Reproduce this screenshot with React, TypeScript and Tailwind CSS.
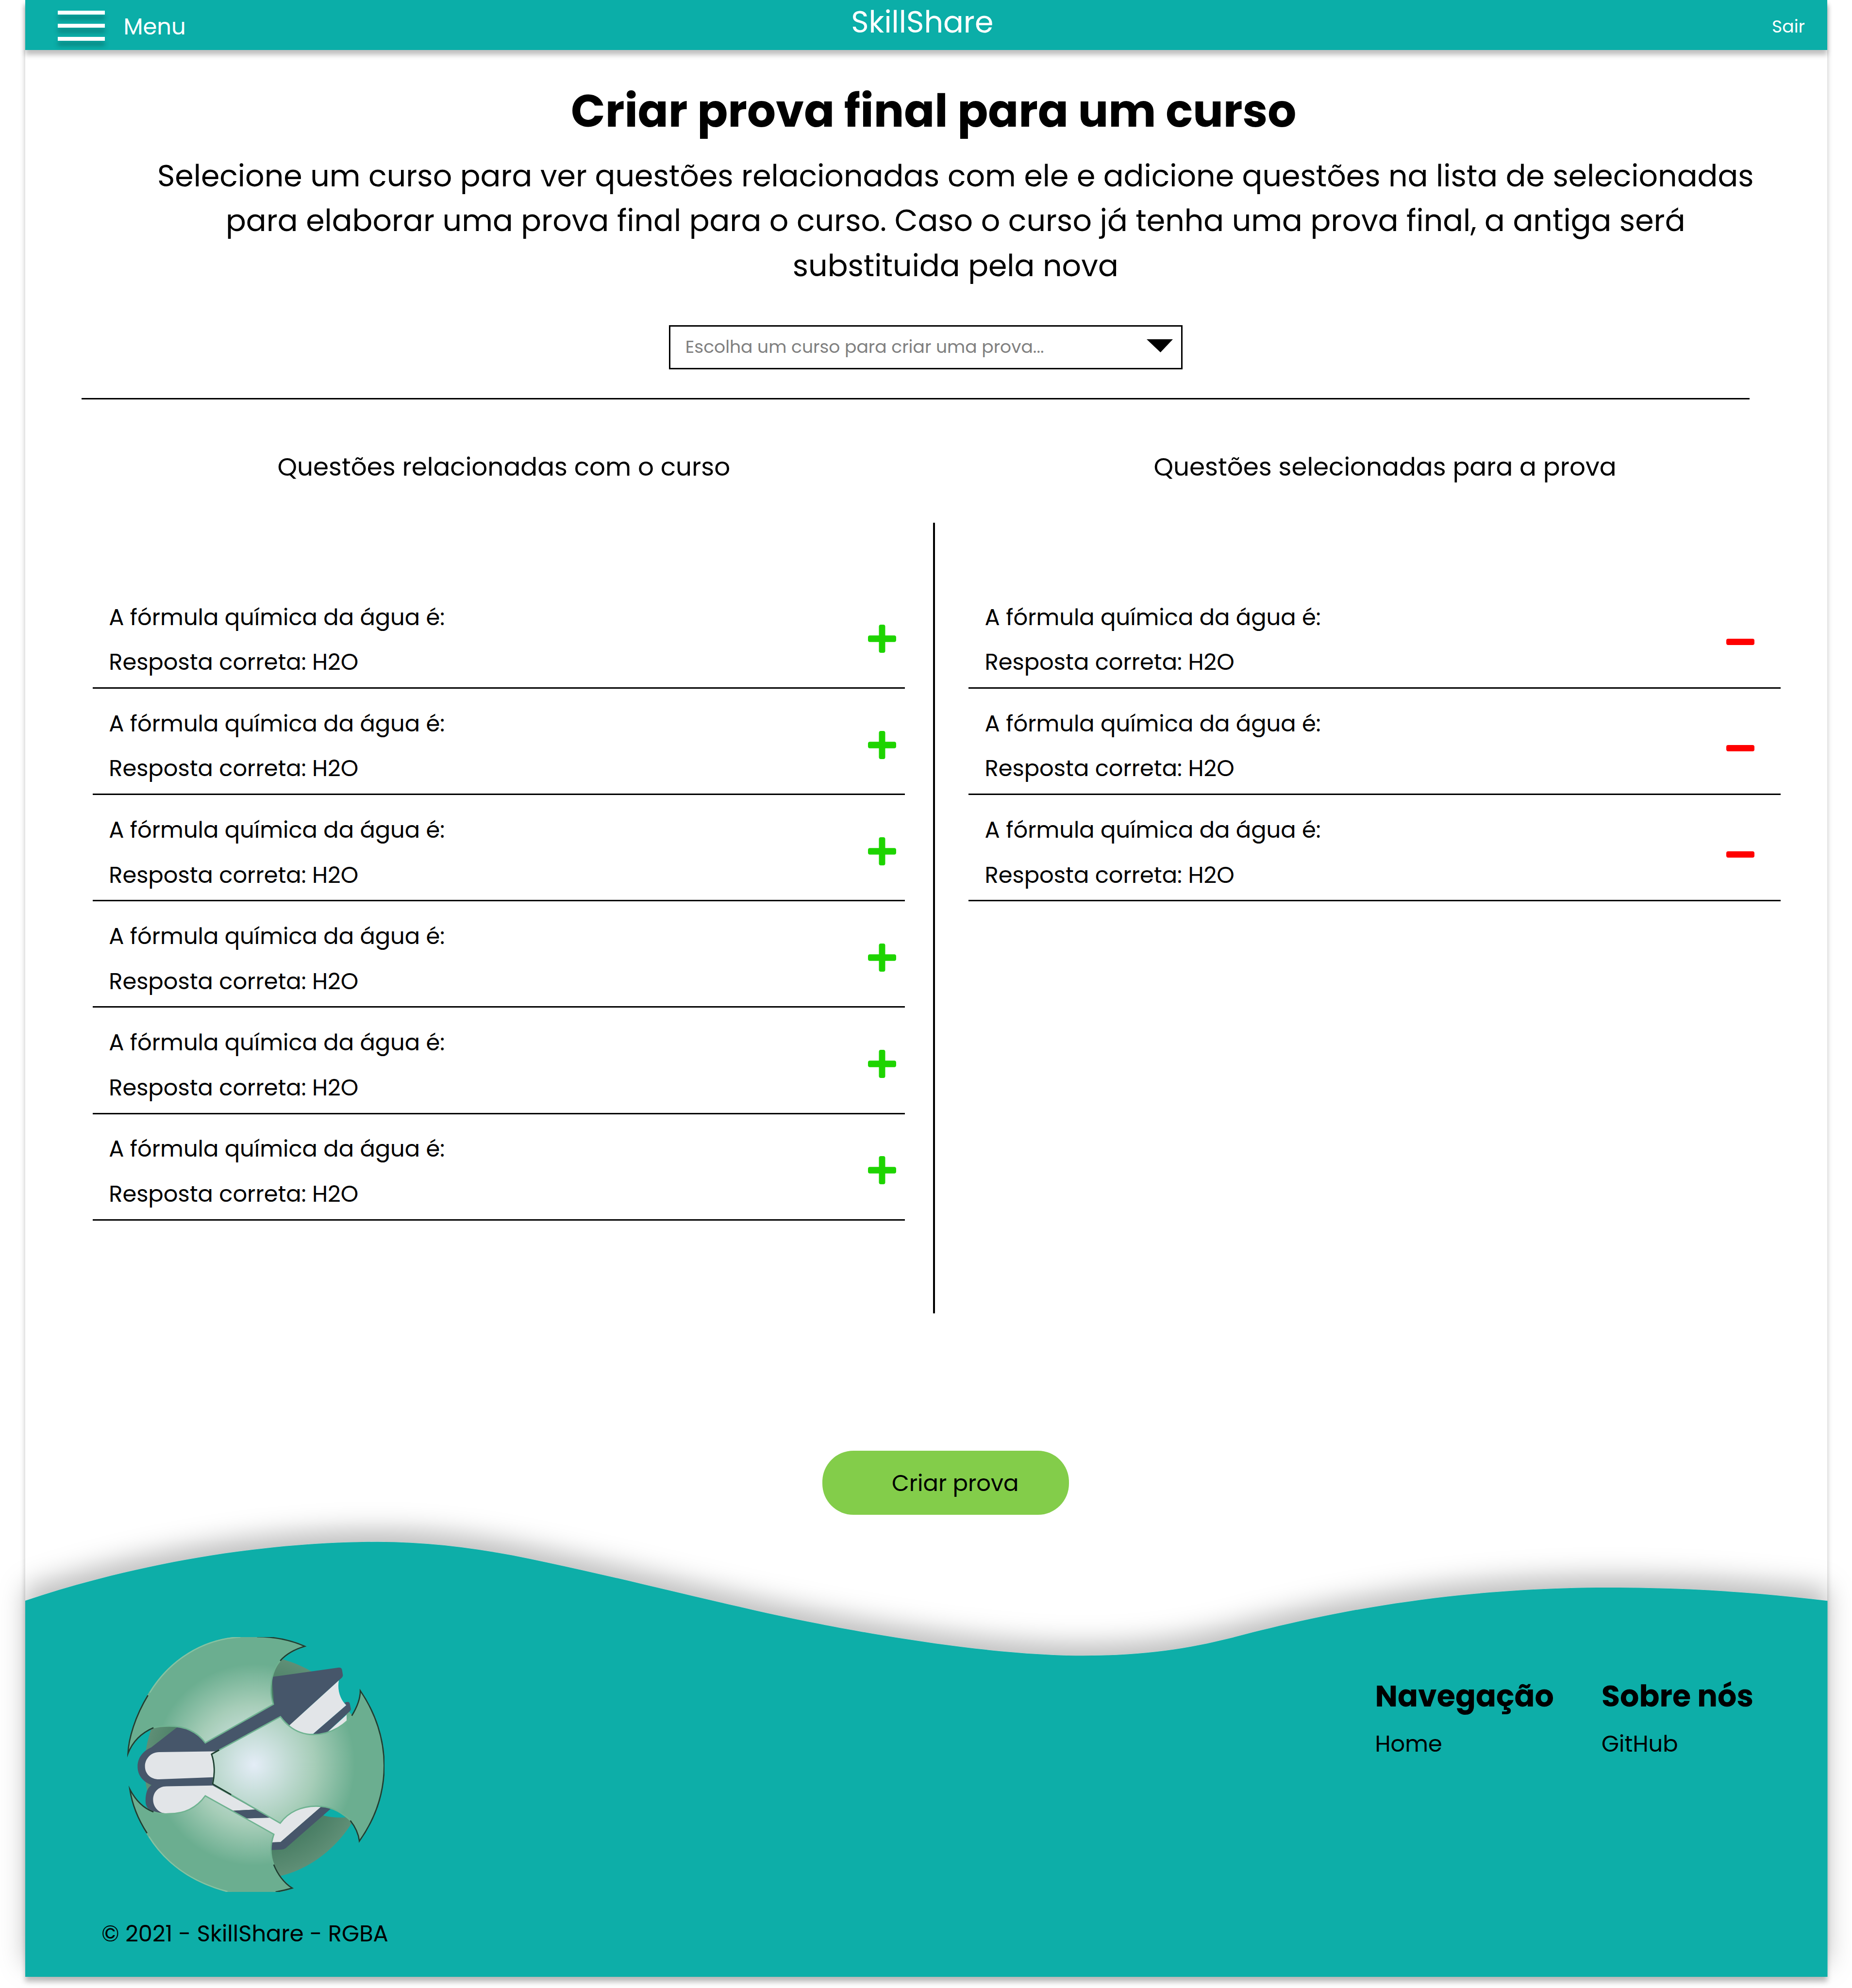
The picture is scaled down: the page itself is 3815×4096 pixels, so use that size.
import type { ReactNode } from "react";

const QUESTION = {
  title: "A fórmula química da água é:",
  answer: "Resposta correta: H2O",
};

const related = Array.from({ length: 6 }, () => QUESTION);
const selected = Array.from({ length: 3 }, () => QUESTION);

function PlusIcon() {
  return (
    <svg viewBox="0 0 58 58" className="mt-[86.5px] h-[58px] w-[58px]" fill="#1ed400">
      <rect x="0" y="22.3" width="58" height="13.4" rx="4" />
      <rect x="22.5" y="0" width="13" height="58" rx="4" />
    </svg>
  );
}

function MinusIcon() {
  return (
    <svg viewBox="0 0 58 13" className="mt-[115.5px] h-[13px] w-[58px]" fill="#ff0000">
      <rect x="0" y="0" width="58" height="13" rx="4" />
    </svg>
  );
}

function QuestionRow({ title, answer, icon }: { title: string; answer: string; icon: ReactNode }) {
  return (
    <li className="flex h-[219.1px] flex-col">
      <div className="flex h-[216.3px] justify-between pl-[33.5px]">
        <div className="pt-[25.5px] text-[46.4px] leading-[92.8px]">
          <p>{title}</p>
          <p>{answer}</p>
        </div>
        {icon}
      </div>
      <div className="h-[3px] bg-black" />
    </li>
  );
}

function Header() {
  return (
    <header className="relative grid h-[103px] shrink-0 grid-cols-3 bg-[#0baea8] text-white shadow-[0_10px_10px_rgba(0,0,0,0.25)]">
      <div className="flex pl-[67px]">
        <div className="flex w-[97px] flex-col gap-[18.7px] pt-[21.8px]">
          <span className="h-[8.3px] bg-white shadow-[0_10px_10px_rgba(0,0,0,0.25)]" />
          <span className="h-[8.3px] bg-white shadow-[0_10px_10px_rgba(0,0,0,0.25)]" />
          <span className="h-[8.3px] bg-white shadow-[0_10px_10px_rgba(0,0,0,0.25)]" />
        </div>
        <span className="pt-[3px] pl-[39px] text-[46.4px] leading-[103px]">Menu</span>
      </div>
      <div className="pr-[16px] text-center text-[61.9px] leading-[91px]">SkillShare</div>
      <div className="pr-[46px] text-right text-[36.1px] leading-[109px]">Sair</div>
    </header>
  );
}

function Wave() {
  return (
    <svg
      viewBox="51.5 3176 3712.5 897"
      className="absolute inset-0 h-full w-full overflow-visible"
      preserveAspectRatio="none"
    >
      <defs>
        <filter id="waveShadow" filterUnits="userSpaceOnUse" x="-100" y="3000" width="4000" height="1200">
          <feDropShadow dx="0" dy="-25.8" stdDeviation="25.8" floodColor="#000" floodOpacity="0.25" />
        </filter>
      </defs>
      <path
        filter="url(#waveShadow)"
        fill="#0baea8"
        d="M51.5 3298 C300 3215 560 3176.7 776.8 3176.7 C870 3176.7 960 3187 1054.5 3204.4 C1240 3241 1450 3296 1616.8 3331.5 C1780 3366 2040 3411.2 2231 3411.2 C2360 3411.2 2450 3396 2534.6 3375 C2670 3340 2940 3271 3313 3271 C3480 3271 3620 3281 3764 3298.3 V4073 H51.5 Z"
      />
    </svg>
  );
}

function Logo() {
  return (
    <svg viewBox="70 90 1400 1376" className="ml-[207.2px] h-[524.4px] w-[533.5px]">
      <defs>
        <radialGradient id="blade" gradientUnits="userSpaceOnUse" cx="765" cy="780" r="545">
          <stop offset="0" stopColor="#e4edf7" />
          <stop offset="0.6" stopColor="#a6cdb8" />
          <stop offset="1" stopColor="#6bae90" />
        </radialGradient>
        <radialGradient id="disc" gradientUnits="userSpaceOnUse" cx="770" cy="795" r="600">
          <stop offset="0.75" stopColor="#4b7f66" />
          <stop offset="1" stopColor="#5f8f76" />
        </radialGradient>
      </defs>

      {/* shaded disc behind the figure, open on the upper right */}
      <path
        fill="url(#disc)"
        d="M172 795 A600 600 0 0 1 925 212 C980 228 1030 250 1075 276 L1000 600 L1140 1055 C1185 1067 1230 1068 1282 1062 L1290 1098 C1200 1240 1060 1345 905 1382 L500 1330 A600 600 0 0 1 172 795 Z"
      />
      <path fill="#6bae90" d="M1262 510 L1275 490 L1300 520 L1262 550 Z" />

      {/* upper arm and hands */}
      <g fill="#46566a">
        <path d="M860 305 Q880 303 900 300 L1218 255 Q1236 253 1239 266 L1244 296 Q1244 304 1238 310 L1222 324 L955 567 L905 520 L560 720 L560 900 L250 900 C180 890 134 850 134 790 C134 740 165 705 208 686 L352 574 L500 560 L500 664 L872 452 Z" />
        <path d="M212 888 C186 905 177 935 177 975 C177 1010 195 1030 240 1044 L400 1044 L560 900 L560 870 Z" />
        <path d="M1083 613 L1262 458 L1252 444 Q1262 440 1272 440 Q1279 441 1281 449 L1287 478 Q1288 484 1282 490 L1158 606 L1120 630 Z" />
      </g>
      <g fill="#e2e5e8">
        <path d="M1222 324 C1212 380 1232 430 1262 458 L1083 613 L1000 620 L955 567 Z" />
        <path d="M1158 606 L1264 510 L1264 545 L1210 610 Z" />
        <path d="M580 707 L250 712 C205 712 174 750 174 788 C174 830 205 859 250 859 L560 847 Z" />
        <path d="M540 892 L290 897 C245 897 218 930 218 970 C218 1010 250 1044 290 1044 L500 1044 L500 948 L652 1029 L770 1022 Z" />
        <path d="M720 1070 L850 1066 L905 1097 C960 1000 1060 990 1130 1004 L907 1198 L862 1200 L873 1156 Z" />
      </g>
      <g fill="#46566a">
        <path d="M650 1029 L772 1022 L852 1066 L720 1070 Z" />
        <path d="M1130 1004 L1178 1018 L935 1231 Q924 1239 912 1239 L855 1241 L860 1200 L907 1198 Z" />
      </g>

      {/* three shutter blades */}
      <g fill="url(#blade)" stroke="#6fb391" strokeWidth="7">
        <path d="M534 723 L906 520 C950 580 1010 617 1085 617 C1180 617 1265 560 1302 500 C1326 460 1338 420 1338 380 C1420 500 1467 640 1467 785 C1467 930 1420 1070 1333 1193 C1328 1150 1310 1110 1278 1075 C1220 1025 1170 1004 1100 1004 C1020 1004 950 1035 905 1096 L540 884 C552 830 552 775 534 723 Z" />
        <path d="M82 720 C85 640 120 520 190 405 C300 215 490 100 690 90 C830 80 950 100 1038 140 C970 160 930 190 905 218 C850 280 845 390 868 453 L500 662 C455 600 390 571 305 571 C270 571 245 573 220 580 C150 610 105 660 82 720 Z" />
        <path d="M92 912 C125 975 165 1015 220 1035 C250 1045 280 1047 305 1045 C390 1045 455 1010 500 948 L871 1156 C850 1210 850 1270 870 1320 C890 1370 925 1420 970 1447 C850 1485 720 1485 620 1466 C430 1415 290 1320 190 1160 C140 1080 105 1000 92 912 Z" />
      </g>
      <g fill="none" stroke="#1f3d31" strokeWidth="7" strokeMiterlimit="8">
        <path d="M1292 515 C1326 460 1338 420 1338 380 C1420 500 1467 640 1467 785 C1467 930 1420 1070 1333 1193 C1328 1150 1310 1115 1284 1082" />
        <path d="M575 700 L534 723 C552 775 552 830 540 884 L640 942" />
        <path d="M190 405 C120 520 85 640 82 720 C105 660 150 610 220 580" />
        <path d="M780 88 C870 88 960 105 1038 140 C970 160 930 190 905 218" />
        <path d="M185 1150 C140 1080 105 1000 92 912 C125 975 165 1015 220 1035" />
        <path d="M870 1320 C890 1370 925 1420 970 1447 C940 1456 910 1463 880 1468" />
      </g>
      <g fill="none" stroke="#86c2a2" strokeWidth="7">
        <path d="M200 390 C310 210 490 100 690 90" />
        <path d="M195 1168 C290 1320 430 1415 620 1466" />
      </g>
    </svg>
  );
}

function Footer() {
  return (
    <footer className="relative mt-auto flex h-[897px] shrink-0 justify-between">
      <Wave />
      <div className="relative flex flex-col pt-[197.4px]">
        <Logo />
        <p className="mt-[40px] pl-[157.5px] text-[46.4px] leading-[92.8px]">© 2021 - SkillShare - RGBA</p>
      </div>
      <nav className="relative flex pt-[272.5px]">
        <div className="w-[466.5px]">
          <h2 className="text-[61.9px] leading-[92.8px] font-bold">Navegação</h2>
          <a className="mt-[5.7px] block text-[46.4px] leading-[92.8px]">Home</a>
        </div>
        <div className="w-[465px]">
          <h2 className="text-[61.9px] leading-[92.8px] font-bold">Sobre nós</h2>
          <a className="mt-[5.7px] block text-[46.4px] leading-[92.8px]">GitHub</a>
        </div>
      </nav>
    </footer>
  );
}

export default function App() {
  return (
    <div className="h-[4096px] w-[3815px] overflow-hidden bg-white pl-[51.5px] font-['Poppins','Inter',sans-serif] text-black">
      <div className="flex h-[4073px] w-[3712.5px] flex-col bg-white shadow-[0_10px_10px_rgba(0,0,0,0.25)]">
        <Header />

        <main className="flex flex-col">
          <h1 className="mt-[55.5px] pl-[31px] text-center text-[92.8px] leading-[140px] font-bold">
            Criar prova final para um curso
          </h1>
          <p className="mt-[18.2px] pl-[121px] text-center text-[61.9px] leading-[92.8px] whitespace-nowrap">
            Selecione um curso para ver questões relacionadas com ele e adicione questões na lista de selecionadas
            <br />
            para elaborar uma prova final para o curso. Caso o curso já tenha uma prova final, a antiga será
            <br />
            substituida pela nova
          </p>

          <div className="mt-[74.9px] ml-[1326.8px] flex h-[90.7px] w-[1058px] items-start justify-between border-[3px] border-black pr-[17px] pl-[30.5px]">
            <span className="text-[36.1px] leading-[84px] text-[#808080]">
              Escolha um curso para criar uma prova...
            </span>
            <svg viewBox="0 0 54 27" className="mt-[26.5px] h-[27px] w-[54px]">
              <path d="M0 0 H54 L28.5 27 Z" />
            </svg>
          </div>

          <div className="mt-[59px] ml-[116px] h-[3px] w-[3436px] bg-black" />

          <div className="mt-[100px] ml-[139.2px] flex h-[1783px] items-start">
            <section className="w-[1673.4px]">
              <h3 className="pl-[21px] text-center text-[51.6px] leading-[79px]">
                Questões relacionadas com o curso
              </h3>
              <ul className="mt-[198.4px]">
                {related.map((q, i) => (
                  <QuestionRow
                    key={i}
                    {...q}
                    icon={
                      <div className="pr-[18px]">
                        <PlusIcon />
                      </div>
                    }
                  />
                ))}
              </ul>
            </section>

            <div className="mt-[154.4px] ml-[58.4px] h-[1628.7px] w-[4px] bg-black" />

            <section className="ml-[68.6px] w-[1673px]">
              <h3 className="pl-[43px] text-center text-[51.6px] leading-[79px]">
                Questões selecionadas para a prova
              </h3>
              <ul className="mt-[198.4px]">
                {selected.map((q, i) => (
                  <QuestionRow
                    key={i}
                    {...q}
                    icon={
                      <div className="pr-[54px]">
                        <MinusIcon />
                      </div>
                    }
                  />
                ))}
              </ul>
            </section>
          </div>

          <button className="mt-[283.5px] ml-[1642px] h-[131.8px] w-[508.3px] rounded-[64px] bg-[#83cd4a] pt-[1px] pl-[143.5px] text-left text-[46.4px]">
            Criar prova
          </button>
        </main>

        <Footer />
      </div>
    </div>
  );
}
